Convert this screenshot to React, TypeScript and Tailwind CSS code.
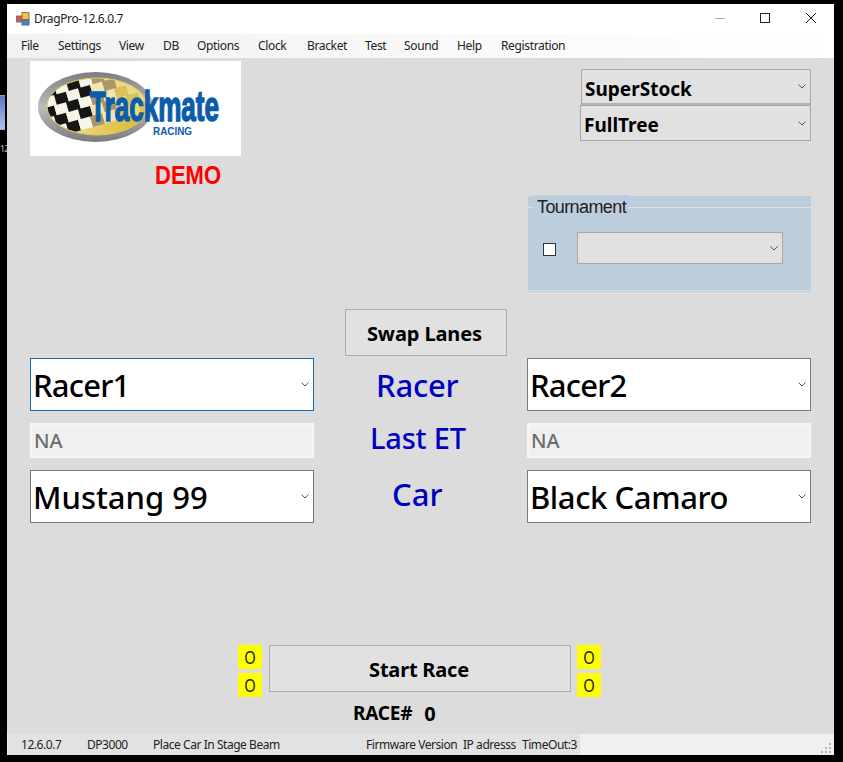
import type { ReactNode } from 'react';

const menuItems = [
  { label: 'File', width: 'w-[37px]' },
  { label: 'Settings', width: 'w-[61px]' },
  { label: 'View', width: 'w-[44px]' },
  { label: 'DB', width: 'w-[34px]' },
  { label: 'Options', width: 'w-[61px]' },
  { label: 'Clock', width: 'w-[49px]' },
  { label: 'Bracket', width: 'w-[58px]' },
  { label: 'Test', width: 'w-[39px]' },
  { label: 'Sound', width: 'w-[53px]' },
  { label: 'Help', width: 'w-[44px]' },
  { label: 'Registration', width: 'w-[70px]' },
];

const statusItems = [
  { label: '12.6.0.7', width: 'w-[66px]' },
  { label: 'DP3000', width: 'w-[66px]' },
  { label: 'Place Car In Stage Beam', width: 'w-[213px]' },
  { label: 'Firmware Version', width: 'w-[97px]' },
  { label: 'IP adresss', width: 'w-[59px]' },
  { label: 'TimeOut:3', width: 'w-[58px]' },
];

function Chevron() {
  return (
    <svg width="8" height="5" viewBox="0 0 8 5" className="mr-[4px] shrink-0">
      <path d="M0.5 0.5 L4 4 L7.5 0.5" fill="none" stroke="#555" strokeWidth="1" />
    </svg>
  );
}

function Combo({ className, textClass = '', children }: { className: string; textClass?: string; children?: ReactNode }) {
  return (
    <div className={`flex items-center justify-between ${className}`}>
      <span className={`whitespace-nowrap text-black ${textClass}`}>{children}</span>
      <Chevron />
    </div>
  );
}

function TitleIcon() {
  return (
    <svg width="14" height="14" viewBox="0 0 14 14" className="shrink-0">
      <rect x="0.5" y="4" width="6" height="6" fill="#d9534f" stroke="#7a7a7a" />
      <rect x="6" y="0.5" width="7" height="7" fill="#f2c14e" stroke="#8a7a3a" />
      <rect x="6" y="8" width="7" height="5" fill="#4f7fc9" stroke="#5a6a8a" />
    </svg>
  );
}

function Logo() {
  const squares: ReactNode[] = [];
  for (let i = 0; i < 9; i++) {
    for (let j = 0; j < 7; j++) {
      const x = 12 + i * 12;
      // flag lines bend a little towards the right
      const y = 6 + j * 10.5 - i * 3.4;
      const dark = (i + j) % 2 === 0;
      let fill = dark ? '#161616' : '#f7f5ea';
      if (i >= 6) fill = dark ? '#d9c25c' : '#ecd988';
      else if (i >= 4) fill = dark ? '#a8976a' : '#efe6b4';
      squares.push(
        <polygon
          key={`${i}-${j}`}
          points={`${x},${y} ${x + 12},${y - 3.4} ${x + 15},${y + 7.1} ${x + 3},${y + 10.5}`}
          fill={fill}
        />,
      );
    }
  }
  return (
    <div className="mt-[3px] h-[95px] w-[211px] bg-white">
      <svg width="211" height="95" viewBox="0 0 211 95">
        <defs>
          <linearGradient id="rim" x1="0" y1="0" x2="0" y2="1">
            <stop offset="0" stopColor="#7d7d7d" />
            <stop offset="0.5" stopColor="#bdbdbd" />
            <stop offset="1" stopColor="#7a7a7a" />
          </linearGradient>
          <linearGradient id="gold" x1="0" y1="0" x2="1" y2="0">
            <stop offset="0" stopColor="#f1e7a0" />
            <stop offset="1" stopColor="#dcb530" />
          </linearGradient>
          <clipPath id="inner">
            <ellipse cx="67" cy="45.5" rx="50" ry="28.5" />
          </clipPath>
        </defs>
        <ellipse cx="65.5" cy="46" rx="57.5" ry="35" fill="url(#rim)" />
        <ellipse cx="67" cy="45.5" rx="50" ry="28.5" fill="url(#gold)" />
        <g clipPath="url(#inner)">{squares}</g>
        <ellipse cx="67" cy="45.5" rx="50" ry="28.5" fill="none" stroke="#d8cf5a" strokeWidth="1" />
        <text
          x="60"
          y="60"
          textLength="129"
          lengthAdjust="spacingAndGlyphs"
          fontFamily="'Liberation Sans', sans-serif"
          fontWeight="700"
          fontSize="42"
          fill="#0b5cab"
          stroke="#0b5cab"
          strokeWidth="1.5"
        >
          Trackmate
        </text>
        <text
          x="123"
          y="74"
          textLength="39"
          lengthAdjust="spacingAndGlyphs"
          fontFamily="'Liberation Sans', sans-serif"
          fontWeight="700"
          fontSize="10.5"
          fill="#0b5cab"
        >
          RACING
        </text>
      </svg>
    </div>
  );
}

function YellowPair() {
  return (
    <div className="flex w-[24px] flex-col gap-[4px]">
      <div className="flex h-[24px] items-center justify-center bg-[#ffff00] text-[18px] leading-none text-[#222]">
        <span className="scale-x-[0.82]">O</span>
      </div>
      <div className="flex h-[24px] items-center justify-center bg-[#ffff00] text-[18px] leading-none text-[#222]">
        <span className="scale-x-[0.82]">O</span>
      </div>
    </div>
  );
}

export default function App() {
  return (
    <div
      className="flex h-[762px] w-[843px] overflow-hidden bg-black"
      style={{ fontFamily: "'Noto Sans', 'Open Sans', sans-serif" }}
    >
      {/* what shows of the desktop behind the window */}
      <div className="flex w-[7px] shrink-0 flex-col overflow-hidden pt-[95px]">
        <div className="h-[35px] w-[5px] border-y border-[#8aa0d8] bg-gradient-to-b from-[#5b76c4] to-[#b4c0e4]" />
        <div className="mt-[14px] text-[9px] leading-none tracking-[-1px] text-[#bbb]">12</div>
      </div>

      <div className="mb-[7px] mt-[4px] flex w-[827px] shrink-0 flex-col bg-[#dcdcdc]">
        {/* title bar */}
        <div className="flex h-[30px] items-center bg-white pl-[9px] text-black">
          <TitleIcon />
          <span className="ml-[4px] text-[12px] tracking-[-0.35px] text-[#222]">DragPro-12.6.0.7</span>
          <div className="ml-auto mt-[-2px] flex items-center">
            <div className="mr-[35px] h-px w-[10px] bg-[#aaa]" />
            <div className="mr-[35px] h-[10px] w-[10px] border border-[#222]" />
            <svg width="12" height="12" viewBox="0 0 12 12" className="mr-[17px]">
              <path d="M1 1 L11 11 M11 1 L1 11" stroke="#222" strokeWidth="1" />
            </svg>
          </div>
        </div>

        {/* menu bar */}
        <div className="flex h-[24px] items-center bg-gradient-to-r from-[#f2f2f2] to-white pl-[14px] text-[12px] text-[#222]">
          {menuItems.map((item) => (
            <span key={item.label} className={`${item.width} whitespace-nowrap tracking-[-0.35px]`}>
              {item.label}
            </span>
          ))}
        </div>

        {/* form */}
        <div className="flex flex-1 flex-col px-[23px]">
          <div className="flex h-[251px] justify-between">
            <div className="flex flex-col">
              <Logo />
              <div className="ml-[125px] mt-[4px] w-fit origin-left scale-x-[0.88] text-[25px] font-bold leading-[30px] text-[#ff0000] [font-family:'Liberation_Sans',sans-serif]">
                DEMO
              </div>
            </div>
            <div className="flex w-[284px] flex-col items-end pt-[11px]">
              <Combo className="h-[36px] w-[230px] border border-[#a8a8a8] border-b-2 border-b-[#b4b4b4] bg-[#e1e1e1] pl-[3px] text-[19px] font-bold" textClass="pt-[5px]">
                SuperStock
              </Combo>
              <Combo className="h-[36px] w-[231px] border border-[#a8a8a8] bg-[#e1e1e1] pl-[3px] text-[19px] font-bold" textClass="pt-[5px]">
                FullTree
              </Combo>
              <div className="mt-[55px] h-[96px] w-[283px] bg-[#bccddc]">
                <div className="h-[11px]" />
                <div className="h-[84px] border-y border-[#d8e2ea] pl-[15px]">
                  <div className="-mt-[13px] ml-[-9px] w-fit bg-[#bccddc] px-[3px] text-[18px] leading-[24px] tracking-[-0.6px] text-[#222] [font-family:'Liberation_Sans',sans-serif]">
                    Tournament
                  </div>
                  <div className="mt-[13px] flex items-center">
                    <div className="mt-[2px] h-[13px] w-[13px] border border-[#333] bg-white" />
                    <Combo className="ml-[21px] h-[32px] w-[206px] border border-[#a8a8a8] bg-[#e1e1e1]" />
                  </div>
                </div>
              </div>
            </div>
          </div>

          <div className="pl-[315px]">
            <div className="flex h-[47px] w-[162px] items-center justify-center border border-[#adadad] bg-[#e1e1e1] pr-[3px] pt-[2px] text-[20px] font-bold tracking-[-0.1px] text-black">
              Swap Lanes
            </div>
          </div>

          <div className="mt-[2px] grid grid-cols-[284px_213px_284px] grid-rows-[53px_35px_53px] gap-y-[12px]">
            <Combo className="border border-[#0f6cb4] bg-white pl-[2px] text-[31px] font-medium" textClass="pt-[2px] tracking-[-0.8px]">Racer1</Combo>
            <div className="pl-[62px] text-[31px] font-medium leading-[55px] tracking-[-0.2px] text-[#0000c0]">Racer</div>
            <Combo className="border border-[#7a7a7a] bg-white pl-[2px] text-[31px] font-medium" textClass="pt-[2px] tracking-[-0.8px]">Racer2</Combo>

            <div className="flex items-center border-2 border-[#f6f6f6] bg-[#f0f0f0] pl-[2px] text-[20px] font-medium text-[#6d6d6d]">NA</div>
            <div className="pl-[56px] text-[29px] font-medium leading-[30px] tracking-[-0.2px] text-[#0000c0]">Last ET</div>
            <div className="flex items-center border-2 border-[#f6f6f6] bg-[#f0f0f0] pl-[2px] text-[20px] font-medium text-[#6d6d6d]">NA</div>

            <Combo className="border border-[#7a7a7a] bg-white pl-[2px] text-[31px] font-medium" textClass="pt-[2px]">Mustang 99</Combo>
            <div className="pl-[78px] text-[31px] font-medium leading-[48px] text-[#0000c0]">Car</div>
            <Combo className="border border-[#7a7a7a] bg-white pl-[2px] text-[31px] font-medium" textClass="pt-[2px] tracking-[-0.4px]">Black Camaro</Combo>
          </div>

          <div className="mt-[122px] flex pl-[208px]">
            <YellowPair />
            <div className="ml-[7px] mr-[6px] flex h-[47px] w-[302px] items-center justify-center border border-[#adadad] bg-[#e1e1e1] pr-[2px] pt-[2px] text-[20px] font-bold tracking-[-0.2px] text-black">
              Start Race
            </div>
            <YellowPair />
          </div>

          <div className="mt-[2px] flex items-center pl-[323px] text-black">
            <span className="text-[19px] font-bold leading-[26px] tracking-[-0.2px]">RACE#</span>
            <span className="ml-[12px] pt-[2px] text-[20px] font-bold leading-[26px]">0</span>
          </div>
        </div>

        {/* status bar */}
        <div className="flex h-[21px] items-center bg-[#f0f0f0] pl-[1px] text-[12px] text-[#222]">
          <div className="flex h-full w-[572px] items-center bg-[#e2e2e2] pl-[13px]">
            {statusItems.map((item) => (
              <span key={item.label} className={`${item.width} whitespace-nowrap tracking-[-0.45px]`}>
                {item.label}
              </span>
            ))}
          </div>
          <svg width="11" height="11" viewBox="0 0 11 11" className="ml-auto mr-[2px] mt-[6px]">
            <path d="M8 1h2v2H8zM4 5h2v2H4zM8 5h2v2H8zM0 9h2v2H0zM4 9h2v2H4zM8 9h2v2H8z" fill="#b5b5b5" />
          </svg>
        </div>
      </div>
    </div>
  );
}
